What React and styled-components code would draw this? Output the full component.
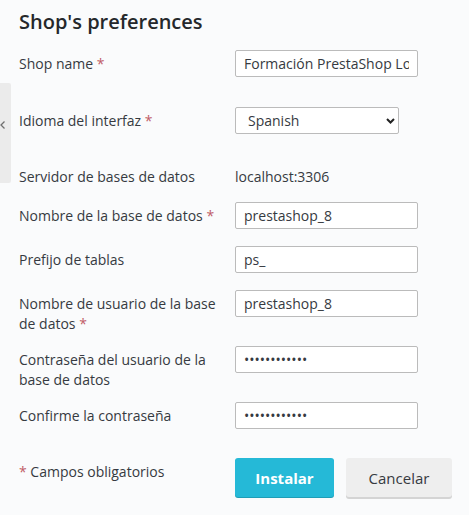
import React from "react";
import styled, { createGlobalStyle } from "styled-components";

const Global = createGlobalStyle`
  html, body { margin: 0; padding: 0; background: #fafbfc; }
  body { font-family: "Open Sans", "Noto Sans", sans-serif; color: #363a41; }
  * { box-sizing: border-box; }
`;

const Page = styled.div`
  position: relative;
  width: 469px;
  min-height: 515px;
  padding: 8px 0 0 19px;
`;

const SideTab = styled.div`
  position: absolute;
  left: 0;
  top: 83px;
  width: 11px;
  height: 100px;
  background: #ebebeb;
  border-radius: 0 2px 2px 0;
  display: flex;
  align-items: flex-start;
  padding-top: 37px;
  color: #6c6c6c;
  svg { margin-left: -1px; }
`;

const Title = styled.h2`
  margin: 0;
  font-size: 20px;
  line-height: 28px;
  font-weight: 600;
  color: #25282b;
`;

const Form = styled.form`
  margin-top: 14px;
  display: flex;
  flex-direction: column;
`;

const Row = styled.div`
  display: grid;
  grid-template-columns: 216px 1fr;
  align-items: start;
  margin-top: ${(p) => p.$space || 0}px;
`;

const Label = styled.label`
  padding-top: 4px;
  font-size: 14px;
  line-height: 20px;
  color: #363a41;
  padding-right: 10px;
`;

const Req = styled.span`
  color: #c05c67;
`;

const Input = styled.input`
  width: ${(p) => p.$w || 183}px;
  height: 27px;
  border: 1px solid #bbbbbb;
  border-radius: 2px;
  background: #fff;
  padding: 0 8px;
  font-family: "Open Sans", sans-serif;
  font-size: 14px;
  color: #363a41;
  outline: none;
`;

const SelectWrap = styled.div`
  position: relative;
  width: 164px;
  height: 27px;
`;

const Select = styled.select`
  appearance: none;
  width: 100%;
  height: 100%;
  border: 1px solid #bbbbbb;
  border-radius: 2px;
  background: #fff;
  padding: 0 12px;
  font-family: "Open Sans", sans-serif;
  font-size: 14px;
  color: #363a41;
  outline: none;
`;

const Chevron = styled.svg`
  position: absolute;
  right: 4px;
  top: 11px;
  pointer-events: none;
`;

const Value = styled.div`
  font-size: 14px;
  line-height: 27px;
  color: #363a41;
`;

const Buttons = styled.div`
  display: flex;
  gap: 12px;
`;

const Button = styled.button`
  height: 39px;
  width: ${(p) => p.$w}px;
  border: none;
  border-radius: 3px;
  font-family: "Open Sans", sans-serif;
  font-size: 15px;
  cursor: pointer;
  background: ${(p) => (p.$primary ? "#25b9d7" : "#eeeeee")};
  color: ${(p) => (p.$primary ? "#ffffff" : "#363a41")};
  font-weight: ${(p) => (p.$primary ? 700 : 400)};
  box-shadow: ${(p) =>
    p.$primary ? "0 1px 0 #1f9db6" : "0 2px 0 #d4d4d4"};
`;

export default function App() {
  return (
    <>
      <Global />
      <Page>
        <SideTab>
          <svg width="8" height="10" viewBox="0 0 8 10">
            <path d="M5.5 1.5 L2 5 L5.5 8.5" fill="none" stroke="#707070" strokeWidth="1.3" />
          </svg>
        </SideTab>
        <Title>Shop's preferences</Title>
        <Form onSubmit={(e) => e.preventDefault()}>
          <Row>
            <Label>
              Shop name <Req>*</Req>
            </Label>
            <Input defaultValue="Formación PrestaShop Local" />
          </Row>
          <Row $space={30}>
            <Label>
              Idioma del interfaz <Req>*</Req>
            </Label>
            <SelectWrap>
              <Select defaultValue="es">
                <option value="es">Spanish</option>
                <option value="en">English</option>
              </Select>
              <Chevron width="9" height="6" viewBox="0 0 9 6">
                <path d="M1 1 L4.5 4.5 L8 1" fill="none" stroke="#222" strokeWidth="2" />
              </Chevron>
            </SelectWrap>
          </Row>
          <Row $space={29}>
            <Label>Servidor de bases de datos</Label>
            <Value>localhost:3306</Value>
          </Row>
          <Row $space={12}>
            <Label>
              Nombre de la base de datos <Req>*</Req>
            </Label>
            <Input defaultValue="prestashop_8" />
          </Row>
          <Row $space={17}>
            <Label>Prefijo de tablas</Label>
            <Input defaultValue="ps_" />
          </Row>
          <Row $space={17}>
            <Label>
              Nombre de usuario de la base de datos <Req>*</Req>
            </Label>
            <Input defaultValue="prestashop_8" />
          </Row>
          <Row $space={12}>
            <Label>Contraseña del usuario de la base de datos</Label>
            <Input type="password" defaultValue="123456789012" />
          </Row>
          <Row $space={12}>
            <Label>Confirme la contraseña</Label>
            <Input type="password" defaultValue="123456789012" />
          </Row>
          <Row $space={29}>
            <Label>
              <Req>*</Req> Campos obligatorios
            </Label>
            <Buttons>
              <Button type="submit" $primary $w={99}>Instalar</Button>
              <Button type="button" $w={106}>Cancelar</Button>
            </Buttons>
          </Row>
        </Form>
      </Page>
    </>
  );
}
